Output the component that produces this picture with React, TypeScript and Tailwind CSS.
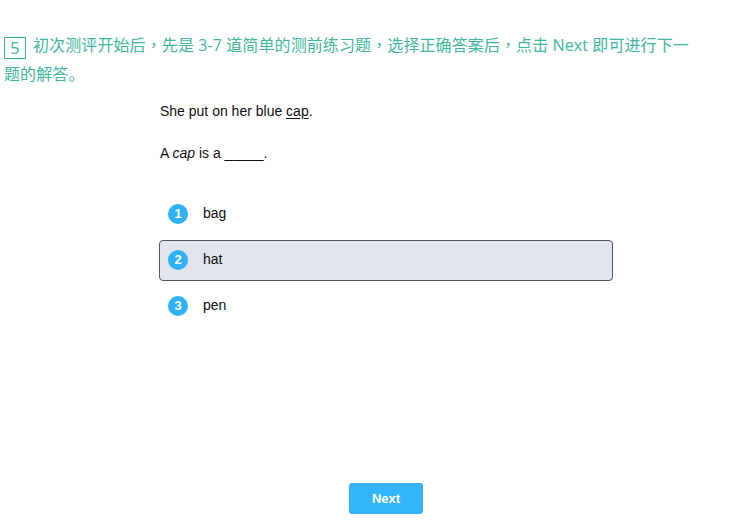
import React from "react";

const options = ["bag", "hat", "pen"];

const Comma = () => (
  <span className="leading-none" style={{ fontFamily: "'Noto Sans CJK TC', sans-serif" }}>，</span>
);

export default function App() {
  return (
    <div className="w-[740px] h-[523px] bg-white relative overflow-hidden" style={{ fontFamily: "Arial, 'Liberation Sans', sans-serif" }}>
      <div
        className="pt-[31px] pl-[4px] text-[16px] leading-[29px] text-[#42b7a0] tracking-[0.1px]"
        style={{ fontFamily: "'Open Sans', 'Noto Sans CJK SC', sans-serif" }}
      >
        <span className="inline-flex items-center justify-center w-[22px] h-[22px] border border-[#42b7a0] text-[17px] leading-none mr-[7px] align-[-3px]">5</span>
        初次测评开始后<Comma />先是 3-7 道简单的测前练习题<Comma />选择正确答案后<Comma />点击 Next 即可进行下一
        <br />
        题的解答。
      </div>

      <div className="ml-[159px] w-[454px] mt-[12px] text-[14px] text-[#111]" style={{ fontFamily: "'Liberation Sans', Arial, sans-serif" }}>
        <p className="pl-[1px] leading-[20px]">
          She put on her blue <span className="underline underline-offset-2">cap</span>.
        </p>
        <p className="pl-[1px] leading-[20px] mt-[22px]">
          A <i>cap</i> is a _____.
        </p>
        <div className="mt-[31px] flex flex-col gap-[5px]">
          {options.map((o, i) => {
            const sel = i === 1;
            return (
              <div
                key={o}
                className={`h-[41px] flex items-center pb-[2px] rounded-[4px] border ${sel ? "border-[#555] bg-[#e1e6ee]" : "border-transparent"}`}
              >
                <span className="ml-[8px] w-[20px] h-[20px] rounded-full bg-[#2fb2f7] text-white text-[13px] font-bold flex items-center justify-center">
                  {i + 1}
                </span>
                <span className="ml-[15px]">{o}</span>
              </div>
            );
          })}
        </div>
      </div>

      <div className="absolute left-[349px] top-[483px]">
        <button className="w-[74px] h-[31px] rounded-[3px] bg-[#33b4fd] text-white text-[13px] font-bold" style={{ fontFamily: "'Liberation Sans', Arial, sans-serif" }}>
          Next
        </button>
      </div>
    </div>
  );
}
